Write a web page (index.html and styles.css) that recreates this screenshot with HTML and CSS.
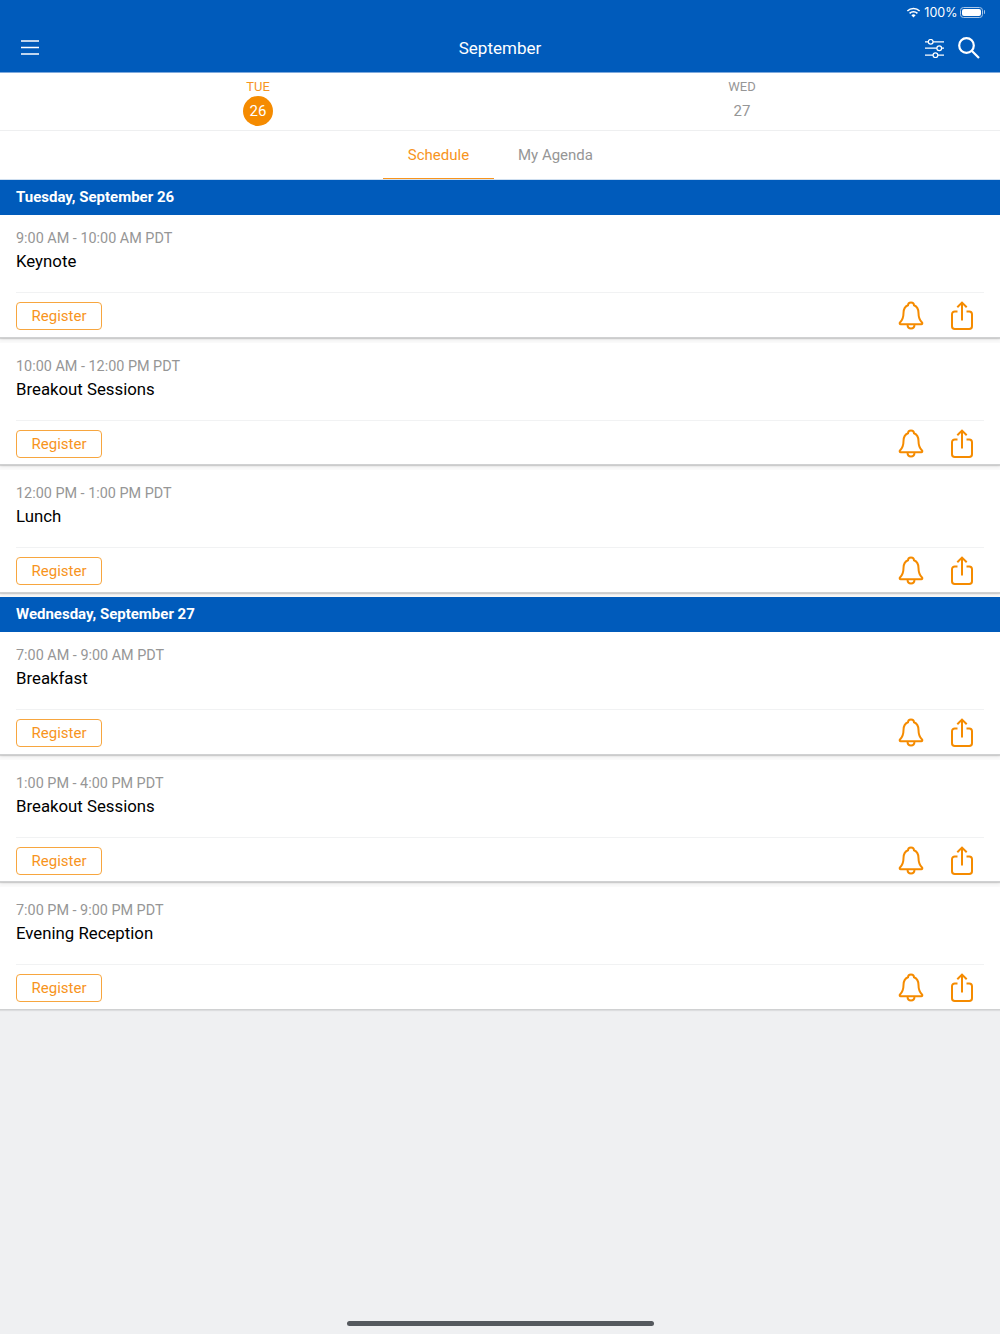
FILE: index.html
```html
<!DOCTYPE html>
<html lang="en">
<head>
<meta charset="utf-8">
<title>September</title>
<link rel="stylesheet" href="styles.css">
</head>
<body>
<svg class="defs" width="0" height="0" aria-hidden="true">
  <symbol id="bell" viewBox="0 0 26 30">
    <path d="M13 1.500c-1.800 0-3 1.200-3 2.800C6.700 5.600 5.500 8.500 5.500 12c0 4.500-1 7-3.500 9.500-.7.700-.3 1.800.7 1.800h20.600c1 0 1.400-1.100.7-1.800-2.500-2.500-3.500-5-3.500-9.500 0-3.500-1.200-6.400-4.500-7.700 0-1.600-1.200-2.800-3-2.800Z"/>
    <path d="M9.500 23.300c0 2.600 1.500 4.200 3.500 4.200s3.500-1.600 3.500-4.200"/>
  </symbol>
  <symbol id="share" viewBox="0 0 24 30">
    <path d="M7.500 10.500H4.800C3.200 10.500 2 11.700 2 13.300v12c0 1.600 1.200 2.800 2.800 2.800h14.400c1.600 0 2.800-1.200 2.800-2.800v-12c0-1.600-1.200-2.800-2.800-2.800h-2.700"/>
    <path d="M12 19.500V1.800M7.300 6.300 12 1.600l4.700 4.700"/>
  </symbol>
</svg>
<header class="appbar">
  <div class="status">
    <svg class="wifi" viewBox="0 0 16 12"><path d="M8 11.500 5.700 9a3.300 3.300 0 0 1 4.600 0Z" class="fill"/><path d="M3.700 6.900a6.100 6.100 0 0 1 8.600 0M1.300 4.300a9.500 9.500 0 0 1 13.400 0"/></svg>
    <span class="pct">100%</span>
    <span class="battery"><span class="battery-fill"></span></span><span class="battery-tip"></span>
  </div>
  <div class="nav">
    <svg class="menu" viewBox="0 0 18 15"><path d="M0 1h18M0 7.500h18M0 14h18"/></svg>
    <h1 class="title">September</h1>
    <div class="nav-actions">
      <svg class="filter" viewBox="0 0 20 20"><path d="M0 3h3.500M8.500 3H20M0 9.700h12.500M17.500 9.700H20M0 17h8.500M13.500 17H20"/><circle cx="6" cy="3" r="2.500"/><circle cx="15" cy="9.700" r="2.500"/><circle cx="11" cy="17" r="2.500"/></svg>
      <svg class="search" viewBox="0 0 22 22"><circle cx="8.500" cy="8.500" r="7.300"/><path d="m14 14 7 7"/></svg>
    </div>
  </div>
</header>
<nav class="days">
  <div class="day day-active"><span class="dow">TUE</span><span class="num">26</span></div>
  <div class="day"><span class="dow">WED</span><span class="num">27</span></div>
</nav>
<nav class="tabs">
  <a class="tab tab-active">Schedule</a>
  <a class="tab">My Agenda</a>
</nav>
<main class="list">
  <h2 class="section">Tuesday, September 26</h2>
  <article class="card">
    <p class="time">9:00 AM - 10:00 AM PDT</p><h3 class="name">Keynote</h3>
    <div class="actions"><button class="reg">Register</button><svg class="ic-bell"><use href="#bell"/></svg><svg class="ic-share"><use href="#share"/></svg></div>
  </article>
  <article class="card">
    <p class="time">10:00 AM - 12:00 PM PDT</p><h3 class="name">Breakout Sessions</h3>
    <div class="actions"><button class="reg">Register</button><svg class="ic-bell"><use href="#bell"/></svg><svg class="ic-share"><use href="#share"/></svg></div>
  </article>
  <article class="card">
    <p class="time">12:00 PM - 1:00 PM PDT</p><h3 class="name">Lunch</h3>
    <div class="actions"><button class="reg">Register</button><svg class="ic-bell"><use href="#bell"/></svg><svg class="ic-share"><use href="#share"/></svg></div>
  </article>
  <h2 class="section">Wednesday, September 27</h2>
  <article class="card">
    <p class="time">7:00 AM - 9:00 AM PDT</p><h3 class="name">Breakfast</h3>
    <div class="actions"><button class="reg">Register</button><svg class="ic-bell"><use href="#bell"/></svg><svg class="ic-share"><use href="#share"/></svg></div>
  </article>
  <article class="card">
    <p class="time">1:00 PM - 4:00 PM PDT</p><h3 class="name">Breakout Sessions</h3>
    <div class="actions"><button class="reg">Register</button><svg class="ic-bell"><use href="#bell"/></svg><svg class="ic-share"><use href="#share"/></svg></div>
  </article>
  <article class="card card-last">
    <p class="time">7:00 PM - 9:00 PM PDT</p><h3 class="name">Evening Reception</h3>
    <div class="actions"><button class="reg">Register</button><svg class="ic-bell"><use href="#bell"/></svg><svg class="ic-share"><use href="#share"/></svg></div>
  </article>
</main>
<div class="home-bar"></div>
</body>
</html>
```
FILE: styles.css
```css
* { box-sizing: border-box; }
html, body { margin: 0; padding: 0; }
body {
  width: 1000px;
  height: 1334px;
  position: relative;
  overflow: hidden;
  background: #eff0f2;
  font-family: "Roboto", sans-serif;
  color: #000;
}
.defs { position: absolute; }
.appbar { height: 73px; background: #005bbb; border-bottom: 1px solid #7faadd; color: #fff; }
.status { height: 24px; display: flex; align-items: center; justify-content: flex-end; padding-right: 15px; gap: 3px; font-size: 13px; }
.wifi { width: 15px; height: 11px; fill: none; stroke: #fff; stroke-width: 1.700; }
.wifi .fill { fill: #fff; stroke: none; }
.pct { font-family: "Inter", sans-serif; font-size: 12.500px; }
.battery { width: 23px; height: 11px; margin-left: -1px; border: 1px solid #a8c6e8; border-radius: 3.500px; padding: 1px; display: flex; }
.battery-fill { flex: 1; background: #fff; border-radius: 2px; }
.battery-tip { width: 1.500px; height: 4px; margin-left: -2px; background: #a8c6e8; border-radius: 0 2px 2px 0; }
.nav { height: 48px; display: flex; align-items: center; padding: 0 20px 0 21px; position: relative; }
.menu { width: 18px; height: 15px; margin-bottom: 1px; fill: none; stroke: #fff; stroke-width: 1.600; }
.title { position: absolute; left: 0; right: 0; margin: 0; text-align: center; font-size: 17px; font-weight: 400; line-height: 48px; pointer-events: none; }
.nav-actions { margin-left: auto; display: flex; align-items: center; gap: 14px; }
.filter { width: 19px; height: 19px; fill: none; stroke: #fff; stroke-width: 1.300; }
.search { width: 22px; height: 22px; fill: none; stroke: #fff; stroke-width: 2.200; }
.days { height: 58px; background: #fff; border-bottom: 1px solid #eeeff0; display: grid; grid-template-columns: 484px 484px; padding-left: 16px; }
.day { display: flex; flex-direction: column; align-items: center; font-size: 13px; color: #969696; }
.dow { line-height: 16px; margin-top: 6px; }
.num { width: 30px; height: 30px; line-height: 30px; margin-top: 1px; text-align: center; font-size: 15px; border-radius: 50%; }
.day-active .dow { color: #f7941d; }
.day-active .num { background: #f58b00; color: #fff; }
.tabs { height: 49px; background: #fff; border-bottom: 1px solid #cfdff0; display: flex; justify-content: center; }
.tab { width: 111px; display: flex; justify-content: center; align-items: center; font-size: 15px; color: #969696; border-bottom: 1px solid transparent; }
.tab-active { color: #f7941d; border-bottom-color: #f7941d; }
.tabs .tab + .tab { width: 123px; }
.list { background: #fafafa; }
.section { margin: 0; height: 35px; background: #005bbb; color: #fff; padding-left: 16px; font-size: 15px; font-weight: 700; line-height: 35px; }
.card + .section { margin-top: -.5px; }
.card { height: 122.500px; margin-bottom: 5px; background: #fff; border-bottom: 1px solid #d0d1d2; box-shadow: 0 1px 1px rgba(0,0,0,.14), 0 2px 3px rgba(0,0,0,.06); padding: 14px 16px 0; }
.card-last { margin-bottom: 0; box-shadow: 0 1px 1px rgba(0,0,0,.08); }
.time { margin: 0 0 -1px; font-size: 14.400px; line-height: 20px; color: #969696; }
.name { margin: 0; font-size: 16.800px; font-weight: 400; line-height: 26px; }
.actions { margin-top: 18px; border-top: 1px solid #f1f2f3; padding-top: 8px; display: flex; align-items: center; }
.reg { width: 86px; height: 28px; padding: 0; background: #fff; border: 1px solid #f7a63f; border-radius: 4px; color: #f7941d; font: inherit; font-size: 15px; }
.ic-bell { width: 26px; height: 30px; margin-left: auto; fill: none; stroke: #f58b00; stroke-width: 2; }
.ic-share { width: 24px; height: 30px; margin-left: 26px; margin-right: 10px; fill: none; stroke: #f58b00; stroke-width: 2; }
.home-bar { position: absolute; left: 347px; top: 1321px; width: 307px; height: 5px; background: #55595e; border-radius: 3px; }
```
